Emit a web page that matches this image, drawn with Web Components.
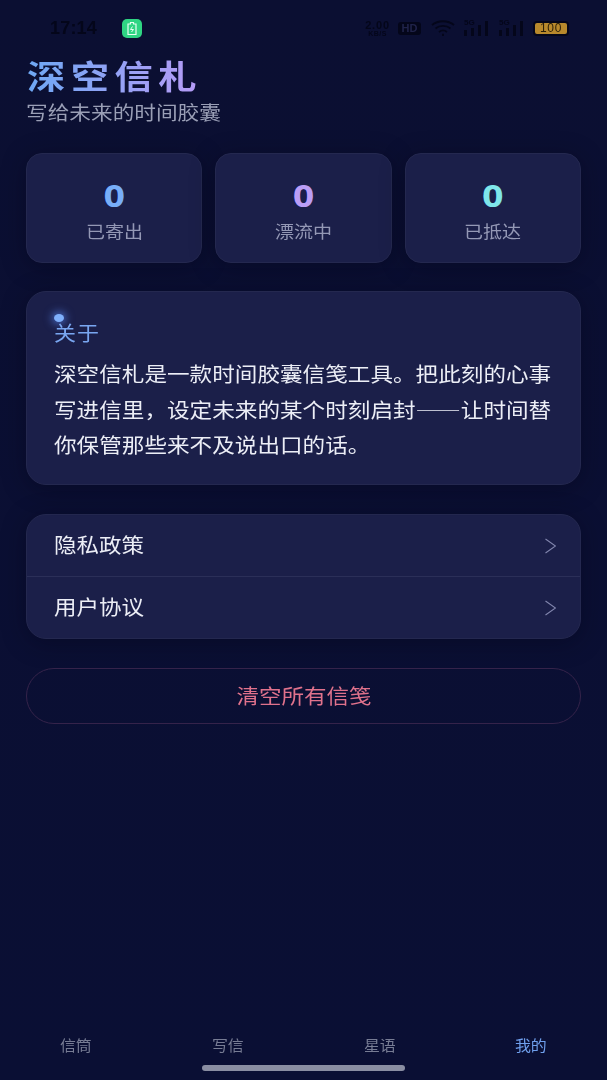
<!DOCTYPE html>
<html lang="zh"><head><meta charset="utf-8"><title>深空信札</title>
<style>
html,body{margin:0;height:1080px;overflow:hidden;background:#0a0e30}
body{font-family:"Noto Sans CJK SC","Noto Sans",sans-serif}
</style></head><body>
<app-page>
<status-bar slot="status"></status-bar>
<page-head slot="head" title-text="深空信札" sub="写给未来的时间胶囊"></page-head>
<div slot="stats" style="display:grid;grid-template-columns:repeat(3,1fr);gap:13px">
<stat-card value="0" label="已寄出" color="#78aef8"></stat-card>
<stat-card value="0" label="漂流中" color="#bb9ef6"></stat-card>
<stat-card value="0" label="已抵达" color="#7fe6ea"></stat-card>
</div>
<about-card slot="about" heading="关于">深空信札是一款时间胶囊信笺工具。把此刻的心事写进信里，设定未来的某个时刻启封——让时间替你保管那些来不及说出口的话。</about-card>
<menu-list slot="menu"><menu-row>隐私政策</menu-row><menu-row>用户协议</menu-row></menu-list>
<danger-button slot="danger">清空所有信笺</danger-button>
<tab-bar slot="tabs"></tab-bar>
</app-page>
<script>
const def=(name,html,init)=>customElements.define(name,class extends HTMLElement{
  constructor(){super();this.attachShadow({mode:'open'}).innerHTML=html}
  connectedCallback(){init&&init(this,this.shadowRoot)}
});
def('app-page',`<style>
:host{display:flex;flex-direction:column;height:1080px;width:607px;background:linear-gradient(180deg,#0b0f32,#0a0f34);box-sizing:border-box}
main{display:flex;flex-direction:column;padding:0 26px;flex:1}
</style><slot name="status"></slot><main><slot name="head"></slot><slot name="stats"></slot>
<div style="height:28px"></div><slot name="about"></slot><div style="height:29px"></div><slot name="menu"></slot><div style="height:29px"></div><slot name="danger"></slot></main><slot name="tabs"></slot>`);
def('status-bar',`<style>
:host{display:flex;align-items:center;height:56px;padding:0 38px 0 50px;box-sizing:border-box;color:#04061a;font-family:"Liberation Sans",sans-serif;filter:blur(.6px)}
.t{font-size:18px;font-weight:700;width:72px;letter-spacing:.2px}
.b{width:20px;height:19px;border-radius:5px;background:#2fd583;display:flex;align-items:center;justify-content:center}
.sp{flex:1}.r{display:flex;align-items:center;height:20px}
.k{display:flex;flex-direction:column;align-items:center;font-weight:700;width:29px}
.k span{font-size:11px;line-height:10px;letter-spacing:.8px}
.k small{font-size:7px;line-height:7px;letter-spacing:.5px}
.hd{background:#04061a;color:#20234a;font-size:11px;font-weight:700;border-radius:3px;height:13px;line-height:13px;width:23px;margin-left:6px;text-align:center}
svg{display:block}
.bat{margin-left:9px;width:36px;height:15px;box-sizing:border-box;border-radius:4px;background:#b8892c;border:2px solid #04061a;color:#2a1e08;font-size:12px;line-height:11px;text-align:center;letter-spacing:.6px}
</style><div class="t">17:14</div><div class="b"><svg width="10" height="13" viewBox="0 0 10 13"><path d="M3.500 .5h3v1.500H9v10.500H1V2h2.500z" fill="none" stroke="#e8fff2" stroke-width="1.200"/><path d="M5.500 4.500 3.500 7.500h3l-2 2.500" stroke="#e8fff2" fill="none"/></svg></div><div class="sp"></div>
<div class="r"><div class="k"><span>2.00</span><small>KB/S</small></div><div class="hd">HD</div>
<svg style="margin-left:10px" width="24" height="16" viewBox="0 0 24 16" fill="none" stroke="#04061a" stroke-width="1.800"><path d="M1 5c6-5 16-5 22 0M4.500 8.500c4-3.500 11-3.500 15 0M8 12c2.500-2 5.500-2 8 0"/><path d="M11 15h2" stroke-width="2.500"/></svg>
${[0,1].map(i=>`<svg style="margin-left:${i?10:9}px" width="25" height="20" viewBox="0 0 25 20" fill="#04061a"><text x="0" y="7" font-size="8" font-weight="700" font-family="Liberation Sans">5G</text><rect x="0" y="12" width="3" height="6"/><rect x="7" y="10" width="3" height="8"/><rect x="14" y="7" width="3" height="11"/><rect x="21" y="3" width="3" height="15"/></svg>`).join('')}
<div class="bat">100</div></div>`);
def('page-head',`<style>
:host{display:block;height:97px}
h1{margin:-2px 0 0 1px;font-size:33px;line-height:42px;font-weight:700;letter-spacing:4.700px;width:max-content;background:linear-gradient(90deg,#6ea8f4,#b79bf6);-webkit-background-clip:text;background-clip:text;color:transparent;transform:scaleX(1.16);transform-origin:left}
p{margin:2px 0 0;font-size:19px;line-height:28px;color:#9a9fb6;width:max-content;transform:scaleX(1.14);transform-origin:left}
</style><h1></h1><p></p>`,(e,s)=>{s.querySelector('h1').textContent=e.getAttribute('title-text');s.querySelector('p').textContent=e.getAttribute('sub')});
def('stat-card',`<style>
:host{display:flex;flex-direction:column;align-items:center;height:110px;box-sizing:border-box;background:#1b1f49;border:1px solid #24284f;border-radius:16px;box-shadow:0 4px 24px rgba(2,3,20,.35);padding-top:22px}
.v{font:700 31px/40px "DejaVu Sans",sans-serif}
.l{font-size:17px;line-height:30px;color:#9498b5;transform:scaleX(1.12)}
</style><div class="v"></div><div class="l"></div>`,(e,s)=>{const v=s.querySelector('.v');v.textContent=e.getAttribute('value');v.style.color=e.getAttribute('color');s.querySelector('.l').textContent=e.getAttribute('label')});
def('about-card',`<style>
:host{display:block;position:relative;height:194px;box-sizing:border-box;background:#1b1f49;border:1px solid #24284f;border-radius:20px;box-shadow:0 4px 24px rgba(2,3,20,.35);padding:25px 0 0 27px}
i{position:absolute;left:27px;top:22px;width:10px;height:8px;border-radius:50%;background:#7fb0fb;box-shadow:0 0 8px 2px rgba(90,140,250,.7)}
h2{margin:0;font-size:20px;line-height:32px;font-weight:400;letter-spacing:.9px;color:#79a6f0;width:max-content;transform:scaleX(1.1);transform-origin:left}
p{margin:7px 0 0;font-size:20px;line-height:35.500px;color:#eceef6;width:445px;transform:scaleX(1.13);transform-origin:left}
</style><i></i><h2></h2><p><slot></slot></p>`,(e,s)=>{s.querySelector('h2').textContent=e.getAttribute('heading')});
def('menu-list',`<style>
:host{display:block;background:#1b1f49;border:1px solid #24284f;border-radius:20px;box-shadow:0 4px 24px rgba(2,3,20,.35);overflow:hidden}
::slotted(menu-row:not(:last-child)){border-bottom:1px solid #2b2f58}
</style><slot></slot>`);
def('menu-row',`<style>
:host{display:flex;align-items:center;justify-content:space-between;height:61px;padding:0 24px 0 27px;font-size:20px;color:#eceef6}
span{display:block;transform:scaleX(1.125);transform-origin:left;margin-top:-2px}
svg{display:block}
</style><span><slot></slot></span><svg width="11" height="16" viewBox="0 0 11 16" fill="none" stroke="#8286ae" stroke-width="1.100"><path d="M.5 1l10 7-10 7"/></svg>`);
def('danger-button',`<style>
:host{display:flex;align-items:center;justify-content:center;height:56px;box-sizing:border-box;border:1px solid #35234a;border-radius:28px;font-size:20px;color:#e0728c}
span{display:block;transform:scaleX(1.125);margin-top:-2px}
</style><span><slot></slot></span>`);
def('tab-bar',`<style>
:host{display:block;position:relative;height:60px}
.t{display:grid;grid-template-columns:repeat(4,1fr);padding-top:12px;font-size:14.500px;line-height:26px;text-align:center;color:#777c94}
span{transform:scaleX(1.1)}
.a{color:#6f9fec}
i{position:absolute;left:202px;top:45px;width:203px;height:6px;border-radius:3px;background:#8a8ea2}
</style><div class="t"><span>信筒</span><span>写信</span><span>星语</span><span class="a">我的</span></div><i></i>`);
</script></body></html>
